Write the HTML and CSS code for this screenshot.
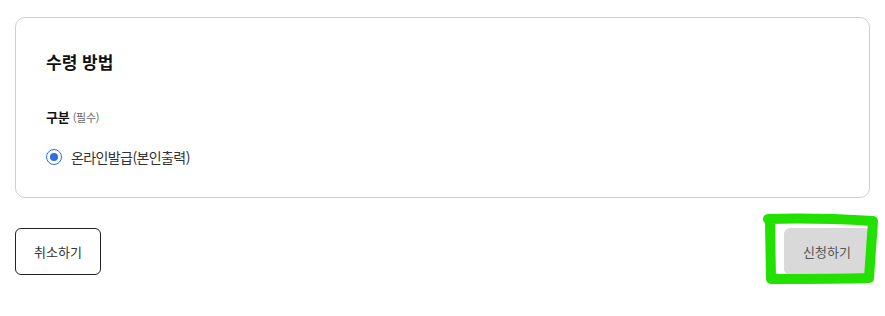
FILE: index.html
```html
<!DOCTYPE html>
<html lang="ko">
<head>
<meta charset="utf-8">
<link rel="stylesheet" href="styles.css">
</head>
<body>
<div class="page">
  <section class="card">
    <h2 class="title">수령 방법</h2>
    <div class="label"><b>구분</b> <span class="req">(필수)</span></div>
    <label class="radio-row">
      <span class="radio"><span class="dot"></span></span>
      <span class="radio-text">온라인발급(본인출력)</span>
    </label>
  </section>
  <div class="actions">
    <button class="btn cancel">취소하기</button>
    <button class="btn submit">신청하기</button>
  </div>
  <svg class="mark" width="885" height="316" viewBox="0 0 885 316">
    <path d="M768 219 C800 218 840 219 873 221 L869 278 C840 279 800 279 771 279 L770 222" fill="none" stroke="#22e000" stroke-width="10" stroke-linejoin="round" stroke-linecap="round"/>
  </svg>
</div>
</body>
</html>
```
FILE: styles.css
```css
* { box-sizing: border-box; }
html, body { margin: 0; padding: 0; background: #fff; }
body { font-family: "Noto Sans CJK KR", "Noto Sans", sans-serif; color: #222; }
.page { position: relative; width: 885px; height: 316px; padding: 17px 15px 0 15px; }
.card {
  height: 181px;
  border: 1px solid #cfcfcf;
  border-radius: 10px;
  padding: 30px 30px 0 30px;
}
.title { margin: 0; font-size: 17px; font-weight: 700; line-height: 28px; color: #111; }
.label { margin-top: 31px; font-size: 13px; line-height: 20px; color: #111; letter-spacing: -0.3px; }
.label b { font-weight: 700; }
.req { font-size: 11px; color: #666; }
.radio-row { display: flex; align-items: center; gap: 9px; margin-top: 20px; }
.radio {
  width: 16px; height: 16px; border-radius: 50%;
  border: 1.5px solid #2f6fe0;
  display: flex; align-items: center; justify-content: center;
}
.dot { width: 8px; height: 8px; border-radius: 50%; background: #2f6fe0; }
.radio-text { font-size: 14px; color: #333; line-height: 20px; letter-spacing: -0.6px; }
.actions { display: flex; justify-content: space-between; margin-top: 30px; }
.btn {
  width: 86px; height: 47px; font-family: inherit; font-size: 13px;
  border-radius: 6px; padding: 0;
}
.cancel { background: #fff; border: 1px solid #222; color: #333; }
.submit { background: #d9d9d9; border: 1px solid #d9d9d9; color: #555; }
.mark { position: absolute; left: 0; top: 0; pointer-events: none; }
```
